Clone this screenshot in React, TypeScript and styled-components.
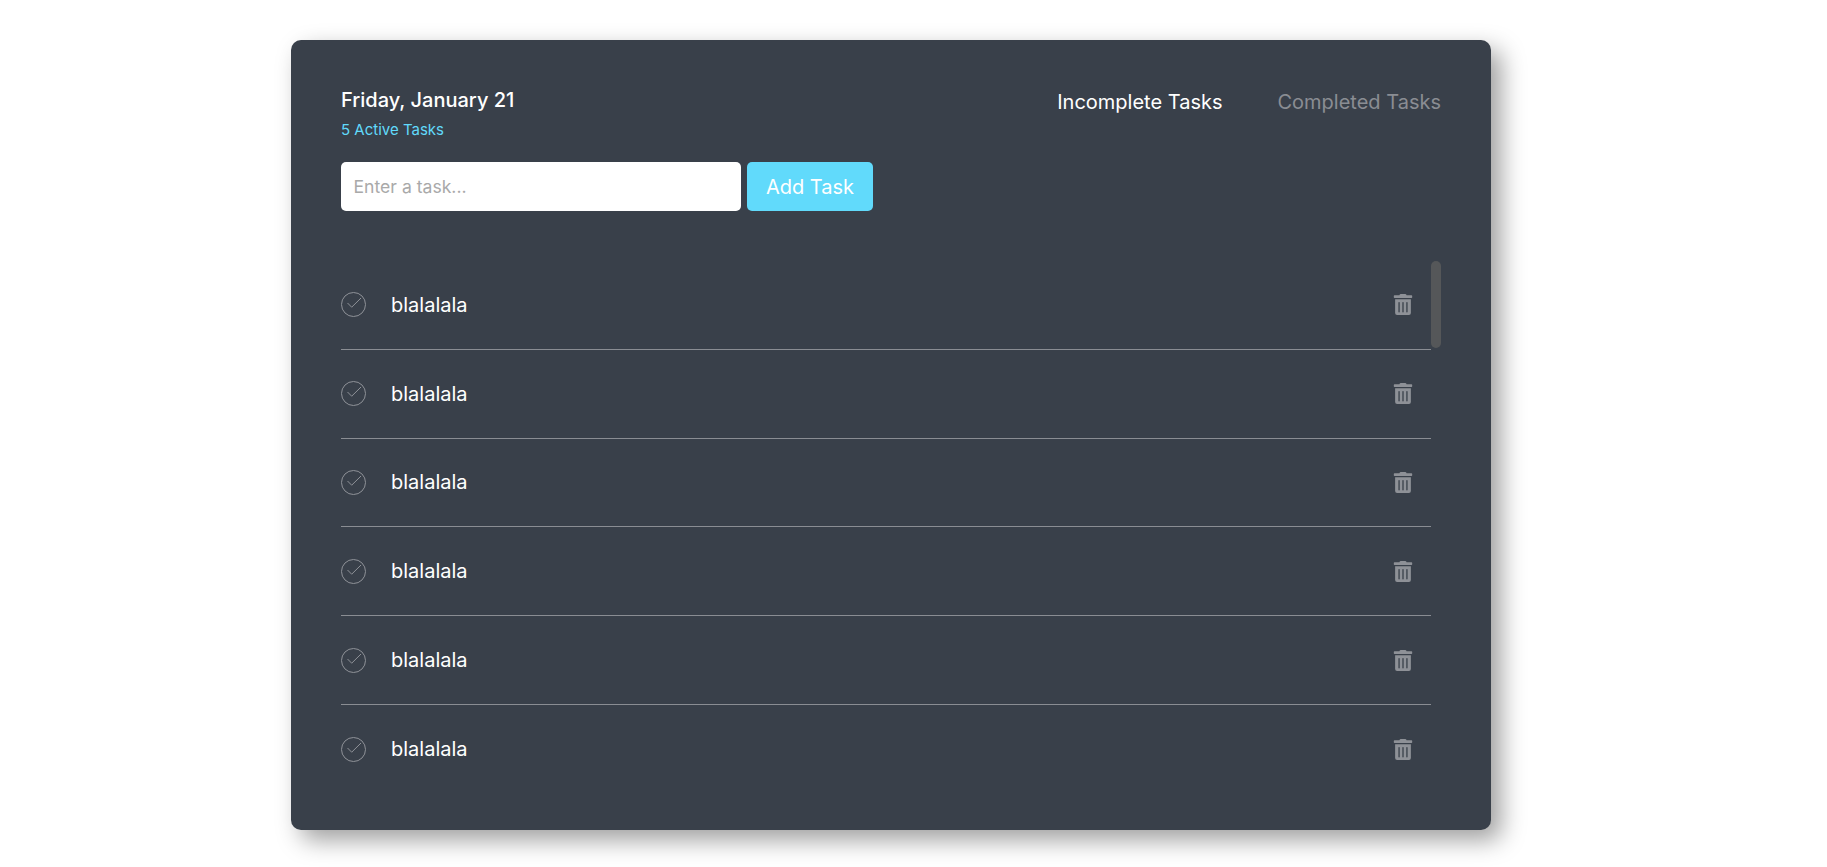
import styled, { createGlobalStyle } from "styled-components";
import { FaTrashAlt } from "react-icons/fa";

const GlobalStyle = createGlobalStyle`
  html, body {
    margin: 0;
    height: 100%;
    overflow: hidden;
    background-color: #ffffff;
    font-family: Inter, "Open Sans", Arial, sans-serif;
  }
`;

const Card = styled.main`
  box-sizing: border-box;
  display: flex;
  flex-direction: column;
  width: 1200px;
  height: 790px;
  margin: 40px 0 0 291px;
  padding: 48px 50px 50px;
  background-color: #39404a;
  border-radius: 10px;
  box-shadow: 10px 10px 24px rgba(0, 0, 0, 0.38);
`;

const Header = styled.header`
  display: flex;
  justify-content: space-between;
  align-items: flex-start;
`;

const DateBlock = styled.div`
  display: flex;
  flex-direction: column;
`;

const DateTitle = styled.h1`
  margin: 0;
  font-size: 20px;
  line-height: 24px;
  font-weight: 500;
  color: #ffffff;
`;

const ActiveCount = styled.span`
  margin-top: 9px;
  font-size: 15px;
  line-height: 18px;
  color: #61dafb;
`;

const Tabs = styled.nav`
  display: flex;
  gap: 55px;
  margin-top: 2px;
`;

const Tab = styled.span<{ $active?: boolean }>`
  font-size: 20px;
  line-height: 24px;
  color: ${(p) => (p.$active ? "#ffffff" : "#8a8d93")};
`;

const AddForm = styled.form`
  display: flex;
  gap: 6px;
  margin-top: 23px;
`;

const TaskInput = styled.input`
  box-sizing: border-box;
  width: 400px;
  height: 49px;
  padding: 0 12.5px;
  border: none;
  border-radius: 5px;
  background-color: #ffffff;
  font-family: inherit;
  font-size: 17.6px;
  &::placeholder {
    color: #a9a9a9;
  }
`;

const AddButton = styled.button`
  width: 126px;
  height: 49px;
  border: none;
  border-radius: 5px;
  background-color: #61dafb;
  color: #ffffff;
  font-family: inherit;
  font-size: 20px;
`;

const ListArea = styled.section`
  flex: 1;
  min-height: 0;
  display: flex;
  margin-top: 50px;
`;

const TaskList = styled.ul`
  flex: 1;
  margin: 0;
  padding: 0;
  list-style: none;
  overflow: hidden;
`;

const ScrollThumb = styled.div`
  flex: none;
  width: 10px;
  height: 87px;
  background-color: #555759;
  border-radius: 5px;
`;

const TaskRow = styled.li`
  box-sizing: border-box;
  display: flex;
  align-items: center;
  height: 88.8px;
  border-bottom: 1px solid #8a8d93;
  &:last-child {
    border-bottom: none;
  }
`;

const TaskText = styled.span`
  flex: 1;
  margin-left: 25px;
  font-size: 20px;
  color: #ffffff;
`;

const DeleteButton = styled.button`
  display: flex;
  align-items: center;
  justify-content: center;
  width: 20px;
  margin-right: 18px;
  padding: 0;
  border: none;
  background: none;
  color: #8e9197;
`;

const CheckIcon = () => (
  <svg width="25" height="25" viewBox="0 0 25 25" fill="none" stroke="#8f9298" strokeWidth="1">
    <circle cx="12.5" cy="12.5" r="12" />
    <path d="M6.5 11l4.2 4.2L20 6" />
  </svg>
);

const tasks = Array.from({ length: 6 }, (_item, i) => ({ id: i, title: "blalalala" }));

export default function App() {
  return (
    <>
      <GlobalStyle />
      <Card>
        <Header>
          <DateBlock>
            <DateTitle>Friday, January 21</DateTitle>
            <ActiveCount>5 Active Tasks</ActiveCount>
          </DateBlock>
          <Tabs>
            <Tab $active>Incomplete Tasks</Tab>
            <Tab>Completed Tasks</Tab>
          </Tabs>
        </Header>
        <AddForm>
          <TaskInput placeholder="Enter a task..." />
          <AddButton type="button">Add Task</AddButton>
        </AddForm>
        <ListArea>
          <TaskList>
            {tasks.map((task) => (
              <TaskRow key={task.id}>
                <CheckIcon />
                <TaskText>{task.title}</TaskText>
                <DeleteButton type="button">
                  <FaTrashAlt size={21} />
                </DeleteButton>
              </TaskRow>
            ))}
          </TaskList>
          <ScrollThumb />
        </ListArea>
      </Card>
    </>
  );
}
